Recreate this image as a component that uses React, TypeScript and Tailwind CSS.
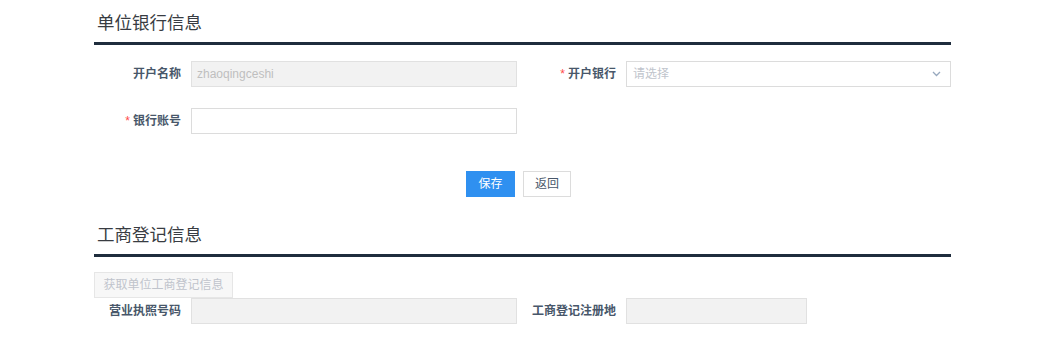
import React from "react";

const font = { fontFamily: '"Liberation Sans", "Noto Sans CJK SC", sans-serif' };

function Label({ text, required, width }: { text: string; required?: boolean; width: string }) {
  return (
    <div className={`${width} shrink-0 flex items-center justify-end pr-[10px] text-[12px] font-bold text-[#48576a]`}>
      {required && <span className="text-[#ff4949] mr-[3px] font-normal">*</span>}
      {text}
    </div>
  );
}

function Heading({ text }: { text: string }) {
  return (
    <div>
      <div className="h-[42px] pt-[10px] pl-[3px] text-[17.5px] leading-[26px] text-[#383c42]">{text}</div>
      <div className="h-[3px] bg-[#1f2d3d]" />
    </div>
  );
}

export default function App() {
  return (
    <div className="w-[1045px] h-[343px] bg-white overflow-hidden" style={font}>
      <div className="ml-[94px] w-[857px]">
        <Heading text="单位银行信息" />
        <div className="mt-[16px] flex h-[26px]">
          <Label text="开户名称" width="w-[97px]" />
          <div className="w-[326px] h-[26px] border border-[#e1e1e1] bg-[#f2f2f2] flex items-center px-[5px] text-[12px] text-[#bfbfbf]">
            zhaoqingceshi
          </div>
          <Label text="开户银行" required width="w-[109px]" />
          <div className="w-[325px] h-[26px] border border-[#dcdcdc] bg-white flex items-center justify-between pl-[6px] pr-[9px] text-[12px] text-[#c0c4cc]">
            <span>请选择</span>
            <svg width="9" height="6" viewBox="0 0 9 6" fill="none">
              <path d="M1 1l3.5 3.5L8 1" stroke="#97a8be" strokeWidth="1.3" />
            </svg>
          </div>
        </div>
        <div className="mt-[21px] flex h-[26px]">
          <Label text="银行账号" required width="w-[97px]" />
          <div className="w-[326px] h-[26px] border border-[#dcdcdc] bg-white" />
        </div>
        <div className="mt-[37px] flex justify-center gap-[8px] pr-[8px]">
          <button className="w-[49px] h-[26px] bg-[#2f90f0] text-white text-[12px]">保存</button>
          <button className="w-[48px] h-[26px] border border-[#dcdcdc] bg-white text-[#48576a] text-[12px]">返回</button>
        </div>
        <div className="mt-[15px]">
          <Heading text="工商登记信息" />
        </div>
        <div className="mt-[15px]">
          <button className="w-[139px] h-[26px] border border-[#e6e6e6] bg-[#f7f7f7] text-[12px] text-[#c0c4cc]">
            获取单位工商登记信息
          </button>
        </div>
        <div className="flex h-[26px]">
          <Label text="营业执照号码" width="w-[97px]" />
          <div className="w-[326px] h-[26px] border border-[#e1e1e1] bg-[#f2f2f2]" />
          <Label text="工商登记注册地" width="w-[109px]" />
          <div className="w-[181px] h-[26px] border border-[#e1e1e1] bg-[#f2f2f2]" />
        </div>
      </div>
    </div>
  );
}
